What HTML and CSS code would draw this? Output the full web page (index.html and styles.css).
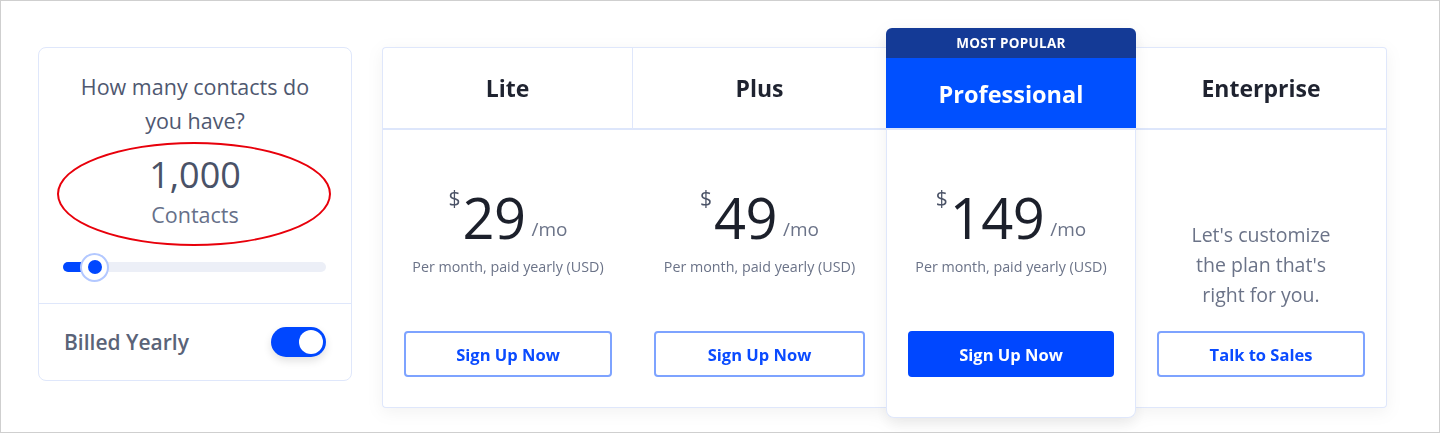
FILE: index.html
```html
<!DOCTYPE html>
<html lang="en">
<head>
    <meta charset="UTF-8">
    <meta name="viewport" content="width=device-width, initial-scale=1.0">
    <title>Pricing</title>
    <link rel="stylesheet" href="styles.css">
</head>
<body>
    <div class="frame">
        <div class="pricing">
            <aside class="calc">
                <div class="calc-top">
                    <p class="question">How many contacts do you have?</p>
                    <div class="count">1,000</div>
                    <div class="count-label">Contacts</div>
                    <div class="slider">
                        <div class="slider-fill" style="width: 12%"></div>
                        <span class="slider-thumb" style="left: 12%"></span>
                    </div>
                    <span class="annotation"></span>
                </div>
                <div class="billing">
                    <span>Billed Yearly</span>
                    <span class="toggle on"><span class="knob"></span></span>
                </div>
            </aside>

            <div class="plans">
                <div class="plan first">
                    <div class="plan-head">Lite</div>
                    <div class="plan-body">
                        <div class="price"><span class="cur">$</span><span class="amount">29</span><span class="per">/mo</span></div>
                        <div class="note">Per month, paid yearly (USD)</div>
                        <button class="btn">Sign Up Now</button>
                    </div>
                </div>
                <div class="plan second">
                    <div class="plan-head">Plus</div>
                    <div class="plan-body">
                        <div class="price"><span class="cur">$</span><span class="amount">49</span><span class="per">/mo</span></div>
                        <div class="note">Per month, paid yearly (USD)</div>
                        <button class="btn">Sign Up Now</button>
                    </div>
                </div>
                <div class="plan popular">
                    <div class="badge">MOST POPULAR</div>
                    <div class="plan-head">Professional</div>
                    <div class="plan-body">
                        <div class="price"><span class="cur">$</span><span class="amount">149</span><span class="per">/mo</span></div>
                        <div class="note">Per month, paid yearly (USD)</div>
                        <button class="btn primary">Sign Up Now</button>
                    </div>
                </div>
                <div class="plan last">
                    <div class="plan-head">Enterprise</div>
                    <div class="plan-body">
                        <p class="custom">Let's customize the plan that's right for you.</p>
                        <button class="btn">Talk to Sales</button>
                    </div>
                </div>
            </div>
        </div>
    </div>
</body>
</html>
```

FILE: styles.css
```css
body {
    margin: 0;
    font-family: "Open Sans", "Noto Sans", sans-serif;
    background: #fff;
}
.frame {
    height: 433px;
    box-sizing: border-box;
    border: 1px solid #cfcfcf;
    overflow: hidden;
}
.pricing {
    display: flex;
    align-items: flex-start;
    gap: 30px;
    padding: 27px 0 0 37px;
}

/* contacts calculator */
.calc {
    margin-top: 19px;
    width: 314px;
    height: 334px;
    box-sizing: border-box;
    border: 1px solid #dfe7fb;
    border-radius: 8px;
    display: flex;
    flex-direction: column;
}
.calc-top {
    position: relative;
    height: 256px;
    padding: 22px 20px 0 20px;
    box-sizing: border-box;
    border-bottom: 1px solid #dfe7fb;
    text-align: center;
}
.question {
    margin: 0 auto;
    width: 250px;
    font-size: 21.5px;
    line-height: 34px;
    color: #4f5870;
}
.count {
    margin-top: 16px;
    font-size: 36px;
    line-height: 42px;
    color: #4a5267;
}
.count-label {
    margin-top: 5px;
    font-size: 21.5px;
    line-height: 28px;
    color: #667089;
}
.slider {
    position: relative;
    margin: 33px 5px 0 4px;
    height: 10px;
    border-radius: 5px;
    background: #eceff7;
}
.slider-fill {
    height: 100%;
    border-radius: 5px;
    background: #0047ff;
}
.slider-thumb {
    position: absolute;
    top: 50%;
    width: 29px;
    height: 29px;
    box-sizing: border-box;
    margin: -14.5px 0 0 -14.5px;
    border: 2px solid #b3c8ff;
    border-radius: 50%;
    background: #fff;
    display: flex;
    align-items: center;
    justify-content: center;
}
.slider-thumb::after {
    content: "";
    width: 14px;
    height: 14px;
    border-radius: 50%;
    background: #0047ff;
}
.annotation {
    position: absolute;
    left: 18px;
    top: 94px;
    width: 274px;
    height: 104px;
    box-sizing: border-box;
    border: 2px solid #e8000b;
    border-radius: 50%;
}
.billing {
    flex: 1;
    display: flex;
    align-items: center;
    justify-content: space-between;
    padding: 0 25px 0 25px;
    font-size: 21px;
    font-weight: 600;
    color: #5a6378;
}
.toggle {
    width: 55px;
    height: 30px;
    border-radius: 15px;
    background: #0047ff;
    display: flex;
    align-items: center;
    justify-content: flex-end;
    padding: 0 3px;
    box-sizing: border-box;
    box-shadow: 0 4px 8px rgba(0, 0, 0, 0.12);
}
.knob {
    width: 24px;
    height: 24px;
    border-radius: 50%;
    background: #fff;
}

/* plan table */
.plans {
    display: flex;
    align-items: flex-start;
    width: 1005px;
    filter: drop-shadow(0 4px 8px rgba(0, 0, 0, 0.05));
}
.plan {
    flex: 0 0 251px;
    margin-top: 19px;
    height: 361px;
    box-sizing: border-box;
    display: flex;
    flex-direction: column;
    border-top: 1px solid #dfe7fb;
    border-bottom: 1px solid #dfe7fb;
    background: #fff;
}
.plan.second {
    flex-basis: 253px;
}
.plan.first {
    border-left: 1px solid #dfe7fb;
    border-radius: 4px 0 0 4px;
}
.plan.first .plan-head {
    border-right: 1px solid #dfe7fb;
}
.plan.last {
    border-right: 1px solid #dfe7fb;
    border-radius: 0 4px 4px 0;
}
.plan-head {
    height: 82px;
    box-sizing: border-box;
    display: flex;
    align-items: center;
    justify-content: center;
    border-bottom: 2px solid #dde6fb;
    font-size: 23px;
    font-weight: 700;
    color: #1f2330;
}
.plan-body {
    flex: 1;
    display: flex;
    flex-direction: column;
    align-items: center;
    padding: 0 21px 30px;
}
.price {
    margin-top: 55px;
    display: flex;
    height: 64px;
    line-height: 64px;
    color: #1c202b;
}
.cur {
    font-size: 21px;
    line-height: 26px;
    color: #4b5367;
    margin-right: 2px;
}
.amount {
    font-size: 56px;
    letter-spacing: -0.5px;
}
.per {
    align-self: flex-end;
    font-size: 19px;
    line-height: 28px;
    margin: 0 0 6px 6px;
    color: #6b7388;
}
.note {
    margin-top: 9px;
    font-size: 14.3px;
    line-height: 18px;
    color: #6b7388;
}
.custom {
    margin: 90px 0 0;
    width: 170px;
    text-align: center;
    font-size: 19.5px;
    line-height: 30px;
    color: #6b7388;
}
.btn {
    margin-top: auto;
    width: 100%;
    height: 46px;
    border: 2px solid #7ea3ff;
    border-radius: 4px;
    background: #fff;
    font-family: inherit;
    font-size: 16.5px;
    font-weight: 700;
    color: #0a4bff;
    cursor: pointer;
}
.btn.primary {
    background: #0047ff;
    border-color: #0047ff;
    color: #fff;
}

.plan.popular {
    flex: 0 0 250px;
    margin-top: 0;
    height: 390px;
    border: 1px solid #dfe7fb;
    border-top: none;
    border-radius: 6px 6px 8px 8px;
    box-shadow: 0 6px 16px rgba(0, 0, 0, 0.06);
    position: relative;
    z-index: 1;
}
.badge {
    height: 30px;
    margin: 0 -1px;
    border-radius: 6px 6px 0 0;
    background: #143a96;
    color: #fff;
    font-size: 13.5px;
    font-weight: 700;
    letter-spacing: 0.3px;
    line-height: 30px;
    text-align: center;
}
.popular .plan-head {
    height: 72px;
    margin: 0 -1px;
    background: #0050ff;
    color: #fff;
    font-size: 23.5px;
    padding-top: 2px;
}
.popular .plan-body {
    padding-bottom: 40px;
}
```
